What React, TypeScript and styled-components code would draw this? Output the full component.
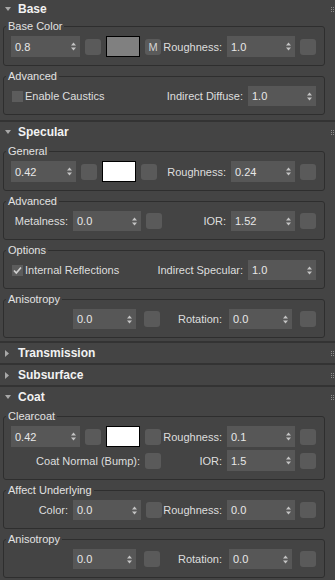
import React from "react";
import styled, { createGlobalStyle } from "styled-components";

const GlobalStyle = createGlobalStyle`
  html, body {
    margin: 0;
    padding: 0;
    background: #333333;
  }
  body {
    font-family: "Liberation Sans", Arial, sans-serif;
    font-size: 11px;
    color: #dedede;
  }
`;

const Panel = styled.div`
  width: 335px;
  height: 580px;
  overflow: hidden;
  background: #333333;
`;

// the panel is scrolled a pixel down, so the first header is cut
const Stack = styled.div`
  display: flex;
  flex-direction: column;
  gap: 2px;
  margin-top: -1px;
`;

const Rollout = styled.section`
  background: #444444;
`;

const Header = styled.div`
  height: 20px;
  display: flex;
  align-items: center;
  padding: 0 1px 0 5px;
  font-size: 12px;
  font-weight: bold;
  color: #f2f2f2;
`;

const Toggle = styled.span`
  width: 13px;
  display: flex;
  align-items: center;
`;

const Title = styled.span`
  flex: 1;
`;

const Body = styled.div<{ $pt?: number; $pb?: number }>`
  display: flex;
  flex-direction: column;
  gap: 3px;
  padding: ${(p) => p.$pt ?? 2}px 0 ${(p) => p.$pb ?? 4}px;
`;

const Group = styled.fieldset`
  margin: 0 10px 0 3px;
  padding: 3px 8px 8px 2px;
  min-width: 0;
  border: 1px solid #2e2e2e;
  border-radius: 3px;
  display: flex;
  flex-direction: column;
  gap: 3px;
`;

const Legend = styled.legend`
  padding: 0 2px;
  line-height: 14px;
  font-size: 11px;
  color: #e2e2e2;
`;

const Row = styled.div<{ $h?: number }>`
  display: flex;
  align-items: center;
  gap: 5px;
  height: ${(p) => p.$h ?? 20}px;
  padding-left: 5px;
`;

const SpinBox = styled.div<{ $w: number; $h?: number; $ml?: number }>`
  flex: none;
  box-sizing: border-box;
  width: ${(p) => p.$w}px;
  height: ${(p) => p.$h ?? 20}px;
  margin-left: ${(p) => p.$ml ?? 0}px;
  padding: 0 4px;
  display: flex;
  align-items: center;
  background: #575757;
  color: #e8e8e8;
`;

const SpinValue = styled.span`
  flex: 1;
`;

const SquareBtn = styled.button<{ $ml?: number }>`
  flex: none;
  width: 16px;
  height: 16px;
  margin-left: ${(p) => p.$ml ?? 0}px;
  padding: 0;
  border: none;
  border-radius: 3px;
  background: #5a5a5a;
  color: #d4d4d4;
  font: 11px "Liberation Sans", Arial, sans-serif;
  display: flex;
  align-items: center;
  justify-content: center;
`;

const Swatch = styled.div<{ $color: string }>`
  flex: none;
  box-sizing: border-box;
  width: 34px;
  height: 21px;
  border: 1px solid #000000;
  background: ${(p) => p.$color};
`;

const FieldLabel = styled.span<{ $w?: number }>`
  flex: none;
  width: ${(p) => (p.$w ? `${p.$w}px` : "auto")};
  display: flex;
  justify-content: flex-end;
  white-space: nowrap;
`;

const Spacer = styled.span`
  flex: 1;
`;

const CheckField = styled.label`
  flex: 1;
  display: flex;
  align-items: center;
  gap: 2px;
  padding-left: 1px;
  white-space: nowrap;
`;

const CheckBox = styled.span`
  flex: none;
  width: 11px;
  height: 11px;
  background: #5c5c5c;
  display: flex;
`;

const SpinArrows = () => (
  <svg width="5" height="9" viewBox="0 0 5 9">
    <polygon points="0,3.5 2.5,0.5 5,3.5" fill="#c4c4c4" />
    <polygon points="0,5.5 2.5,8.5 5,5.5" fill="#c4c4c4" />
  </svg>
);

const Spinner = ({ value, w, h, ml }: { value: string; w: number; h?: number; ml?: number }) => (
  <SpinBox $w={w} $h={h} $ml={ml}>
    <SpinValue>{value}</SpinValue>
    <SpinArrows />
  </SpinBox>
);

const Check = ({ checked, label }: { checked?: boolean; label: string }) => (
  <CheckField>
    <CheckBox>
      {checked && (
        <svg width="11" height="11" viewBox="0 0 11 11">
          <path d="M2 5.5 L4.3 8 L9 2.5" stroke="#cfcfcf" strokeWidth="1.7" fill="none" />
        </svg>
      )}
    </CheckBox>
    {label}
  </CheckField>
);

const Grip = () => (
  <svg width="3" height="5" viewBox="0 0 3 5">
    {[0, 2, 4].map((y) => (
      <React.Fragment key={y}>
        <rect x="0" y={y} width="1" height="1" fill="#8c8c8c" />
        <rect x="2" y={y} width="1" height="1" fill="#8c8c8c" />
      </React.Fragment>
    ))}
  </svg>
);

const RolloutHeader = ({ title, open }: { title: string; open?: boolean }) => (
  <Header>
    <Toggle>
      {open ? (
        <svg width="6" height="4" viewBox="0 0 6 4">
          <polygon points="0,0 6,0 3,4" fill="#a8a8a8" />
        </svg>
      ) : (
        <svg width="4" height="7" viewBox="0 0 4 7">
          <polygon points="0,0 4,3.5 0,7" fill="#a8a8a8" />
        </svg>
      )}
    </Toggle>
    <Title>{title}</Title>
    <Grip />
  </Header>
);

const SwatchRow = ({
  amount,
  color,
  map,
  roughness,
  narrow,
}: {
  amount: string;
  color: string;
  map?: boolean;
  roughness: string;
  narrow?: boolean;
}) => (
  <Row $h={21}>
    <Spinner value={amount} w={narrow ? 65 : 69} h={21} />
    <SquareBtn />
    <Swatch $color={color} />
    <SquareBtn>{map ? "M" : null}</SquareBtn>
    <FieldLabel $w={narrow ? 64 : 56}>Roughness:</FieldLabel>
    <Spinner value={roughness} w={narrow ? 64 : 68} h={21} />
    <SquareBtn />
  </Row>
);

const AnisotropyRow = () => (
  <Row>
    <FieldLabel $w={57} />
    <Spinner value="0.0" w={63} />
    <SquareBtn $ml={3} />
    <Spacer />
    <FieldLabel>Rotation:</FieldLabel>
    <Spinner value="0.0" w={63} ml={2} />
    <SquareBtn $ml={3} />
  </Row>
);

export default function App() {
  return (
    <Panel>
      <GlobalStyle />
      <Stack>
        <Rollout>
          <RolloutHeader title="Base" open />
          <Body $pt={0} $pb={5}>
            <Group>
              <Legend>Base Color</Legend>
              <SwatchRow amount="0.8" color="#808080" map roughness="1.0" />
            </Group>
            <Group>
              <Legend>Advanced</Legend>
              <Row>
                <Check label="Enable Caustics" />
                <FieldLabel>Indirect Diffuse:</FieldLabel>
                <Spinner value="1.0" w={68} />
              </Row>
            </Group>
          </Body>
        </Rollout>

        <Rollout>
          <RolloutHeader title="Specular" open />
          <Body $pb={3}>
            <Group>
              <Legend>General</Legend>
              <SwatchRow amount="0.42" color="#ffffff" roughness="0.24" narrow />
            </Group>
            <Group>
              <Legend>Advanced</Legend>
              <Row>
                <FieldLabel $w={57}>Metalness:</FieldLabel>
                <Spinner value="0.0" w={68} />
                <SquareBtn />
                <Spacer />
                <FieldLabel>IOR:</FieldLabel>
                <Spinner value="1.52" w={64} />
                <SquareBtn />
              </Row>
            </Group>
            <Group>
              <Legend>Options</Legend>
              <Row>
                <Check checked label="Internal Reflections" />
                <FieldLabel>Indirect Specular:</FieldLabel>
                <Spinner value="1.0" w={68} />
              </Row>
            </Group>
            <Group>
              <Legend>Anisotropy</Legend>
              <AnisotropyRow />
            </Group>
          </Body>
        </Rollout>

        <Rollout>
          <RolloutHeader title="Transmission" />
        </Rollout>

        <Rollout>
          <RolloutHeader title="Subsurface" />
        </Rollout>

        <Rollout>
          <RolloutHeader title="Coat" open />
          <Body>
            <Group>
              <Legend>Clearcoat</Legend>
              <SwatchRow amount="0.42" color="#ffffff" roughness="0.1" />
              <Row $h={21}>
                <FieldLabel $w={129}>Coat Normal (Bump):</FieldLabel>
                <SquareBtn />
                <Spacer />
                <FieldLabel>IOR:</FieldLabel>
                <Spinner value="1.5" w={68} h={21} />
                <SquareBtn />
              </Row>
            </Group>
            <Group>
              <Legend>Affect Underlying</Legend>
              <Row>
                <FieldLabel $w={57}>Color:</FieldLabel>
                <Spinner value="0.0" w={68} />
                <SquareBtn />
                <FieldLabel $w={55}>Roughness:</FieldLabel>
                <Spinner value="0.0" w={68} />
                <SquareBtn />
              </Row>
            </Group>
            <Group>
              <Legend>Anisotropy</Legend>
              <AnisotropyRow />
            </Group>
          </Body>
        </Rollout>
      </Stack>
    </Panel>
  );
}
